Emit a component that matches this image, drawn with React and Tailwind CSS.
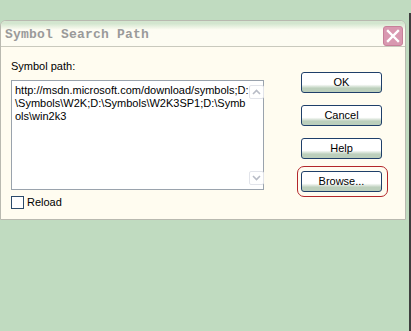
import React from 'react';

function XpButton({ children }) {
  return (
    <button
      type="button"
      className="flex h-[21px] w-[81px] items-center justify-center rounded-[3px] border border-[#1f3f6a] bg-linear-to-b from-white from-60% to-[#bccfbc] to-80% text-[11px] leading-none text-black"
    >
      {children}
    </button>
  );
}

function Chevron({ up }) {
  return (
    <svg width="9" height="6" viewBox="0 0 9 6" className="text-[#b8bcc6]">
      <path
        d={up ? 'M1 5 L4.5 1.5 L8 5' : 'M1 1 L4.5 4.5 L8 1'}
        fill="none"
        stroke="currentColor"
        strokeWidth="1.6"
      />
    </svg>
  );
}

export default function App() {
  return (
    <div
      className="flex h-[331px] w-[411px] overflow-hidden bg-[#c0dbc0]"
      style={{ fontFamily: '"Liberation Sans", Arial, sans-serif' }}
    >
      <div className="w-[409px] pt-[20px]">
        <div className="w-[406px] overflow-hidden rounded-t-[6px] border border-[#b9b9b0] bg-[#fffcf0]">
          {/* title bar */}
          <div className="flex h-[26px] items-center justify-between border-b border-[#c9c9bd] bg-linear-to-b from-[#d3e6cf] from-10% to-[#fdfcf2] to-35% pl-[4px] pr-[2px]">
            <span
              className="pt-[2px] text-[13px] font-bold tracking-[0.2px] text-[#9a9a9a]"
              style={{ fontFamily: '"Liberation Mono", "Courier New", monospace' }}
            >
              Symbol Search Path
            </span>
            <div className="mt-[4px] flex h-[20px] w-[20px] items-center justify-center rounded-[3px] border border-[#c77f99] bg-[#d998b0]">
              <svg width="14" height="14" viewBox="0 0 14 14">
                <path d="M2 2 L12 12 M12 2 L2 12" stroke="white" strokeWidth="2.4" strokeLinecap="square" />
              </svg>
            </div>
          </div>

          {/* body */}
          <div className="flex h-[172px] pl-[10px]">
            <div className="w-[253px] pt-[13px]">
              <div className="h-[13px] text-[11px] leading-[13px] text-black">Symbol path:</div>
              <div className="mt-[7px] flex h-[110px] border border-[#9aa3ad] bg-white">
                <div className="flex-1 pl-[3px] pt-[3px] text-[11px] leading-[13px] text-black">
                  <div>http://msdn.microsoft.com/download/symbols;D:</div>
                  <div>\Symbols\W2K;D:\Symbols\W2K3SP1;D:\Symb</div>
                  <div>ols\win2k3</div>
                </div>
                <div className="flex w-[16px] flex-col justify-between py-[4px] pr-[1px]">
                  <div className="flex h-[14px] w-[15px] items-center justify-center rounded-[2px] border border-[#e2e4ea]">
                    <Chevron up />
                  </div>
                  <div className="flex h-[14px] w-[15px] items-center justify-center rounded-[2px] border border-[#e2e4ea]">
                    <Chevron />
                  </div>
                </div>
              </div>
              <div className="mt-[6px] flex items-center gap-[3px]">
                <div className="h-[13px] w-[13px] border border-[#2b4a6b] bg-white" />
                <span className="text-[11px] leading-[13px] text-black">Reload</span>
              </div>
            </div>

            <div className="ml-[37px] flex flex-col gap-[12px] pt-[25px]">
              <XpButton>OK</XpButton>
              <XpButton>Cancel</XpButton>
              <XpButton>Help</XpButton>
              <div className="relative">
                <XpButton>Browse...</XpButton>
                <span className="pointer-events-none absolute -bottom-[5px] -left-[4px] -right-[6px] -top-[5px] rounded-[7px] border border-[#b3262a]" />
              </div>
            </div>
          </div>
        </div>
      </div>
      <div className="mt-[13px] w-[2px] bg-[#3e3e3e]" />
    </div>
  );
}
